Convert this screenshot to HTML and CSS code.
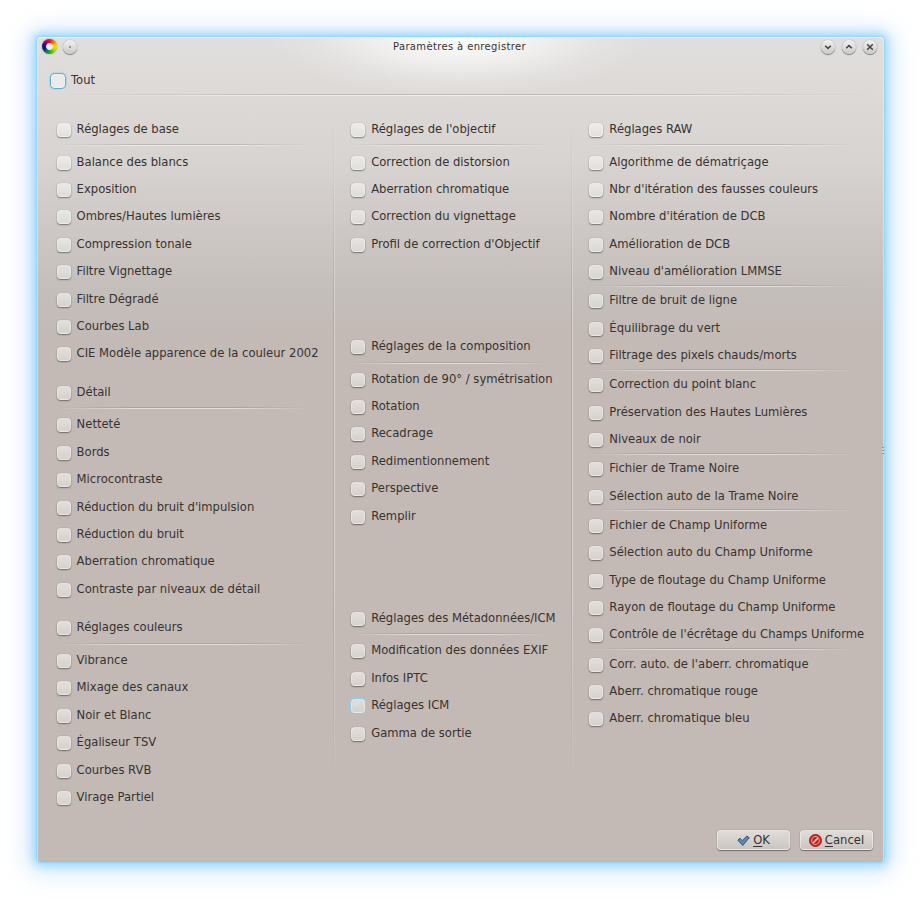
FILE: index.html
```html
<!DOCTYPE html>
<html lang="fr">
<head>
<meta charset="utf-8">
<title>Paramètres à enregistrer</title>
<link rel="stylesheet" href="styles.css">
</head>
<body>
<main class="window">
  <header class="titlebar">
    <div class="side">
      <span class="wheel"></span>
      <span class="round"><svg viewBox="0 0 14 14"><circle cx="7" cy="7" r=".9" fill="#777"/></svg></span>
    </div>
    <h1>Paramètres à enregistrer</h1>
    <div class="side right">
      <span class="round"><svg viewBox="0 0 14 14"><path d="M4.2 5.8 7 8.4 9.8 5.8"/></svg></span>
      <span class="round"><svg viewBox="0 0 14 14"><path d="M4.2 8.2 7 5.6 9.8 8.2"/></svg></span>
      <span class="round"><svg viewBox="0 0 14 14"><path d="M4.2 4.2 9.8 9.8M9.8 4.2 4.2 9.8"/></svg></span>
    </div>
  </header>

  <label class="all focus"><input type="checkbox">Tout</label>
  <hr class="wide">

  <div class="columns">
    <div class="column">
      <section>
        <label><input type="checkbox">Réglages de base</label>
        <hr class="head">
        <label><input type="checkbox">Balance des blancs</label>
        <label><input type="checkbox">Exposition</label>
        <label><input type="checkbox">Ombres/Hautes lumières</label>
        <label><input type="checkbox">Compression tonale</label>
        <label><input type="checkbox">Filtre Vignettage</label>
        <label><input type="checkbox">Filtre Dégradé</label>
        <label><input type="checkbox">Courbes Lab</label>
        <label><input type="checkbox">CIE Modèle apparence de la couleur 2002</label>
      </section>
      <section>
        <label><input type="checkbox">Détail</label>
        <hr class="head">
        <label><input type="checkbox">Netteté</label>
        <label><input type="checkbox">Bords</label>
        <label><input type="checkbox">Microcontraste</label>
        <label><input type="checkbox">Réduction du bruit d'impulsion</label>
        <label><input type="checkbox">Réduction du bruit</label>
        <label><input type="checkbox">Aberration chromatique</label>
        <label><input type="checkbox">Contraste par niveaux de détail</label>
      </section>
      <section>
        <label><input type="checkbox">Réglages couleurs</label>
        <hr class="head">
        <label><input type="checkbox">Vibrance</label>
        <label><input type="checkbox">Mixage des canaux</label>
        <label><input type="checkbox">Noir et Blanc</label>
        <label><input type="checkbox">Égaliseur TSV</label>
        <label><input type="checkbox">Courbes RVB</label>
        <label><input type="checkbox">Virage Partiel</label>
      </section>
    </div>
    <div class="divider"></div>
    <div class="column spread">
      <section>
        <label><input type="checkbox">Réglages de l'objectif</label>
        <hr class="head">
        <label><input type="checkbox">Correction de distorsion</label>
        <label><input type="checkbox">Aberration chromatique</label>
        <label><input type="checkbox">Correction du vignettage</label>
        <label><input type="checkbox">Profil de correction d'Objectif</label>
      </section>
      <section>
        <label><input type="checkbox">Réglages de la composition</label>
        <hr class="head">
        <label><input type="checkbox">Rotation de 90° / symétrisation</label>
        <label><input type="checkbox">Rotation</label>
        <label><input type="checkbox">Recadrage</label>
        <label><input type="checkbox">Redimentionnement</label>
        <label><input type="checkbox">Perspective</label>
        <label><input type="checkbox">Remplir</label>
      </section>
      <section>
        <label><input type="checkbox">Réglages des Métadonnées/ICM</label>
        <hr class="head">
        <label><input type="checkbox">Modification des données EXIF</label>
        <label><input type="checkbox">Infos IPTC</label>
        <label class="hover"><input type="checkbox">Réglages ICM</label>
        <label><input type="checkbox">Gamma de sortie</label>
      </section>
    </div>
    <div class="divider"></div>
    <div class="column">
      <section>
        <label><input type="checkbox">Réglages RAW</label>
        <hr class="head">
        <label><input type="checkbox">Algorithme de dématriçage</label>
        <label><input type="checkbox">Nbr d'itération des fausses couleurs</label>
        <label><input type="checkbox">Nombre d'itération de DCB</label>
        <label><input type="checkbox">Amélioration de DCB</label>
        <label><input type="checkbox">Niveau d'amélioration LMMSE</label>
        <hr>
        <label><input type="checkbox">Filtre de bruit de ligne</label>
        <label><input type="checkbox">Équilibrage du vert</label>
        <label><input type="checkbox">Filtrage des pixels chauds/morts</label>
        <hr>
        <label><input type="checkbox">Correction du point blanc</label>
        <label><input type="checkbox">Préservation des Hautes Lumières</label>
        <label><input type="checkbox">Niveaux de noir</label>
        <hr>
        <label><input type="checkbox">Fichier de Trame Noire</label>
        <label><input type="checkbox">Sélection auto de la Trame Noire</label>
        <hr>
        <label><input type="checkbox">Fichier de Champ Uniforme</label>
        <label><input type="checkbox">Sélection auto du Champ Uniforme</label>
        <label><input type="checkbox">Type de floutage du Champ Uniforme</label>
        <label><input type="checkbox">Rayon de floutage du Champ Uniforme</label>
        <label><input type="checkbox">Contrôle de l'écrêtage du Champs Uniforme</label>
        <hr>
        <label><input type="checkbox">Corr. auto. de l'aberr. chromatique</label>
        <label><input type="checkbox">Aberr. chromatique rouge</label>
        <label><input type="checkbox">Aberr. chromatique bleu</label>
      </section>
    </div>
  </div>

  <footer>
    <button type="button">
      <svg viewBox="0 0 14 14"><path d="M.9 6.6 3.3 4.6 5.6 7.2 10.6 2.2 13.2 4 6.2 12.4Z" fill="#5f86b3" stroke="#34506f" stroke-linejoin="round"/></svg>
      <span><u>O</u>K</span>
    </button>
    <button type="button">
      <svg viewBox="0 0 14 14"><circle cx="7" cy="7" r="6.6" fill="#c3201b" stroke="#9c1512" stroke-width=".7"/><circle cx="7" cy="7" r="4.2" fill="none" stroke="#e3a9a5" stroke-width="1.1"/><path d="M4.2 9.8 9.8 4.2" stroke="#e9c0bd" stroke-width="1.7"/></svg>
      <span><u>C</u>ancel</span>
    </button>
  </footer>
  <span class="grip"></span>
</main>
</body>
</html>
```

FILE: styles.css
```css
* { box-sizing: border-box; }

body {
  min-height: 100vh;
  margin: 0;
  padding: 37px 36px 0 37px;
  background: #fff;
  font: 11.6px/16px "DejaVu Sans", sans-serif;
  color: #37332f;
}

.window {
  position: relative;
  display: flex;
  flex-direction: column;
  width: 847px;
  height: 825px;
  border: 1px solid rgba(235, 240, 240, .55);
  border-top-color: #edf3f4;
  border-bottom-color: #b9b8b8;
  border-radius: 4px;
  background:
    radial-gradient(ellipse 190px 62px at 422px 0, rgba(255, 255, 255, .95), rgba(255, 255, 255, .5) 45%, rgba(255, 255, 255, .15) 75%, rgba(255, 255, 255, 0)),
    linear-gradient(#e0dfdd 0, #ddd9d7 60px, #d8d4d1 120px, #cfcac7 180px, #c4bfba 250px, #c3bbb7 285px, #c3bab6 300px);
  background-origin: border-box;
  box-shadow: 0 0 2px 1px #8fd6fb, 0 0 10px 4px #a3dafb, 0 2px 24px 8px rgba(190, 222, 252, .75);
}

.titlebar {
  display: grid;
  grid-template-columns: 1fr auto 1fr;
  align-items: center;
  height: 17px;
  padding: 0 6px 0 4px;
}

.titlebar h1 {
  margin: 0;
  font-size: 10px;
  font-weight: normal;
  letter-spacing: .36px;
}

.side { display: flex; align-items: center; gap: 6px; }
.right { justify-content: flex-end; gap: 7px; }

.wheel {
  width: 15px;
  height: 15px;
  border-radius: 50%;
  background:
    radial-gradient(circle, #efeceb 3px, transparent 3.8px),
    conic-gradient(#e21b12, #f57b00 45deg, #ffe000 85deg, #b6d800 125deg, #21b01e 175deg, #087b52 215deg, #101292 250deg, #2a0a80 285deg, #b4006c 325deg, #e21b12);
  box-shadow: 0 0 1px #444;
}

.round {
  width: 14px;
  height: 14px;
  border-radius: 50%;
  background: linear-gradient(#f3f2f1, #cbc8c5);
  box-shadow: 0 1px 1px rgba(0, 0, 0, .4), 0 0 1px rgba(0, 0, 0, .45);
}

.round svg { display: block; }
.round path { fill: none; stroke: #454341; stroke-width: 1.5; }

label {
  display: flex;
  align-items: center;
  gap: 6px;
  height: 27.4px;
  white-space: nowrap;
}

input {
  appearance: none;
  flex: none;
  width: 14px;
  height: 14px;
  margin: 2px 0 0 1px;
  border: 1px solid rgba(255, 255, 255, .35);
  border-radius: 4px;
  background: linear-gradient(rgba(255, 255, 255, .52), rgba(239, 243, 232, .42));
  box-shadow: 0 1px 1.5px rgba(0, 0, 0, .42), 0 0 1px rgba(0, 0, 0, .25);
}

.all {
  height: 28px;
  margin: 10.5px 0 0 12px;
}

.focus input {
  background: #edebea;
  box-shadow: 0 0 0 1px #5aafdb, 0 0 2px 1px #7cc3e8;
}

.hover input { box-shadow: 0 0 1px 1px #7dd2f7; }

hr {
  flex: none;
  width: calc(100% - 8px);
  height: 2px;
  margin: 0 0 -.2px;
  border: 0;
  background:
    linear-gradient(rgba(80, 70, 65, .2) 50%, rgba(255, 255, 255, .5) 50%);
  mask-image: linear-gradient(90deg, transparent, #000 30%, #000 70%, transparent);
}

.head { margin: 2px 0 1.4px; }
.wide { width: auto; margin: 0 12px; }

.columns {
  display: flex;
  height: 696px;
  margin: 19.6px 0 0 17.6px;
}

.column { width: 262.4px; }
.column section + section { margin-top: 11px; }

.spread {
  display: flex;
  flex-direction: column;
  width: 206px;
}

.column.spread section + section { margin-top: 74.7px; }
.spread section:last-child { margin-top: 75px; }

.column:last-child { width: 278px; }

.divider {
  width: 2px;
  height: 680px;
  margin: -5px 15.2px 0 15px;
  background: linear-gradient(90deg, rgba(80, 70, 65, .16) 50%, rgba(255, 255, 255, .35) 50%);
  mask-image: linear-gradient(transparent, #000 30%, #000 70%, transparent);
}

footer {
  display: flex;
  justify-content: flex-end;
  gap: 10px;
  margin: 19px 10px 0 0;
}

button {
  display: flex;
  align-items: center;
  justify-content: center;
  gap: 3px;
  width: 73px;
  height: 20px;
  padding: 0;
  border: 1px solid rgba(255, 255, 255, .45);
  border-radius: 4px;
  background: linear-gradient(#dfdcd9, #cbc6c1);
  box-shadow: 0 1px 1px rgba(0, 0, 0, .4), 0 0 1px rgba(0, 0, 0, .4);
  font: inherit;
  color: inherit;
}

button svg { width: 13px; height: 13px; }
u { text-underline-offset: 2px; }

.grip {
  position: absolute;
  right: -1px;
  top: 409px;
  width: 2px;
  height: 7px;
  background: repeating-linear-gradient(#99928f 0 1px, #d8d3d0 1px 3px);
}
```
